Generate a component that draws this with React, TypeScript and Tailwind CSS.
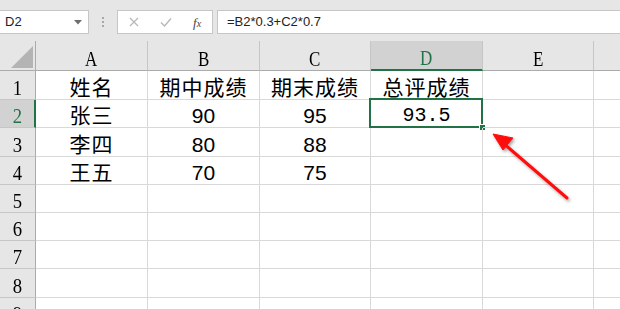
import React from "react";

const cols = [
  { label: "A", w: 112 },
  { label: "B", w: 112 },
  { label: "C", w: 111 },
  { label: "D", w: 112 },
  { label: "E", w: 111 },
  { label: "", w: 112 },
];

const rowHeights = [29, 28, 29, 28, 28, 28, 28, 29, 28];

const data: string[][] = [
  ["姓名", "期中成绩", "期末成绩", "总评成绩", "", ""],
  ["张三", "90", "95", "93.5", "", ""],
  ["李四", "80", "88", "", "", ""],
  ["王五", "70", "75", "", "", ""],
];

const cjk = { fontFamily: '"Noto Sans CJK SC", "Noto Sans", sans-serif' };
const num = { fontFamily: '"Liberation Sans", Arial, sans-serif' };
const serif = { fontFamily: '"Liberation Serif", "Times New Roman", serif' };
const mono = { fontFamily: '"Liberation Mono", "DejaVu Sans Mono", monospace' };

function Cell({ text, w, r, c }: { text: string; w: number; r: number; c: number }) {
  const isSel = r === 1 && c === 3;
  const isNum = /^[0-9.]+$/.test(text);
  const style = isSel ? mono : isNum ? num : cjk;
  return (
    <div
      className="relative shrink-0 border-r border-b border-[#d9d9d9] flex items-center justify-center text-black"
      style={{ width: w }}
    >
      {text && (
        <span
          className={isSel ? "text-[20px] leading-none pt-[4px]" : isNum ? "text-[21px] leading-none pt-[4px]" : "text-[21px] leading-none pt-[2px] tracking-[1px]"}
          style={style}
        >
          {text}
        </span>
      )}
      {isSel && (
        <>
          <div className="absolute -left-[2px] -top-[2px] -right-[1px] -bottom-[1px] border-2 border-[#217346]" />
          <div className="absolute -right-[4px] -bottom-[4px] w-[7px] h-[7px] bg-[#217346] border border-white" />
        </>
      )}
    </div>
  );
}

export default function App() {
  return (
    <div className="relative w-[620px] h-[309px] overflow-hidden bg-white">
      {/* Formula bar */}
      <div className="h-[41px] bg-[#e6e6e6] pt-[10px] flex items-start">
        <div className="w-[89px] h-[24px] bg-white border border-l-0 border-[#c6c6c6] flex items-center justify-between pl-[5px] pr-[6px]">
          <span className="text-[13px] text-[#222]" style={{ fontFamily: '"Liberation Sans", Arial, sans-serif' }}>
            D2
          </span>
          <svg width="8" height="5" viewBox="0 0 8 5">
            <path d="M0 0 L8 0 L4 4.5 Z" fill="#6d6d6d" />
          </svg>
        </div>
        <div className="w-[28px] h-[24px] flex flex-col items-center justify-center gap-[2px]">
          <div className="w-[2px] h-[2px] bg-[#a8a8a8]" />
          <div className="w-[2px] h-[2px] bg-[#a8a8a8]" />
          <div className="w-[2px] h-[2px] bg-[#a8a8a8]" />
        </div>
        <div className="w-[96px] h-[24px] bg-white border border-[#c6c6c6] flex items-center">
          <div className="w-[32px] flex justify-center">
            <svg width="10" height="10" viewBox="0 0 10 10">
              <path d="M1 1 L9 9 M9 1 L1 9" stroke="#b8b8b8" strokeWidth="1.3" />
            </svg>
          </div>
          <div className="w-[33px] flex justify-center">
            <svg width="12" height="10" viewBox="0 0 12 10">
              <path d="M1 5.5 L4.5 9 L11 1.5" stroke="#b8b8b8" strokeWidth="1.4" fill="none" />
            </svg>
          </div>
          <div className="w-[30px] flex justify-center">
            <span className="text-[13px] italic text-[#444] leading-none" style={serif}>
              f<span className="text-[10px]">x</span>
            </span>
          </div>
        </div>
        <div className="ml-[4px] flex-1 h-[24px] bg-white border border-r-0 border-[#c6c6c6] flex items-center pl-[9px]">
          <span className="text-[13px] text-[#222]" style={{ fontFamily: '"Liberation Sans", Arial, sans-serif' }}>
            =B2*0.3+C2*0.7
          </span>
        </div>
      </div>

      {/* Column header */}
      <div className="flex h-[30px]">
        <div className="w-[36px] shrink-0 bg-[#e6e6e6] border-r border-b border-[#ababab] flex items-end justify-end pr-[2px] pb-[2px]">
          <svg width="22" height="22" viewBox="0 0 22 22">
            <path d="M22 0 L22 22 L0 22 Z" fill="#b4b4b4" />
          </svg>
        </div>
        {cols.map((c, i) => {
          const sel = c.label === "D";
          return (
            <div
              key={i}
              className={
                "shrink-0 flex items-center justify-center border-r border-[#c6c6c6] " +
                (sel ? "bg-[#d2d2d2] border-b-2 border-b-[#217346] text-[#217346]" : "bg-[#e6e6e6] border-b border-b-[#ababab] text-black")
              }
              style={{ width: c.w }}
            >
              {c.label && (
                <span className="text-[20px] leading-none pt-[6px] inline-block scale-x-[0.85]" style={serif}>
                  {c.label}
                </span>
              )}
            </div>
          );
        })}
      </div>

      {/* Rows */}
      {rowHeights.map((h, r) => {
        const sel = r === 1;
        return (
          <div key={r} className="flex" style={{ height: h }}>
            <div
              className={
                "w-[36px] shrink-0 border-b border-[#c6c6c6] flex items-center justify-center " +
                (sel ? "bg-[#d2d2d2] border-r-2 border-r-[#217346] text-[#217346]" : "bg-[#e6e6e6] border-r border-r-[#ababab] text-black")
              }
            >
              <span className="text-[22px] leading-none pt-[5px] inline-block scale-x-[0.85]" style={serif}>
                {r + 1}
              </span>
            </div>
            {cols.map((c, ci) => (
              <Cell key={ci} text={data[r]?.[ci] ?? ""} w={c.w} r={r} c={ci} />
            ))}
          </div>
        );
      })}

      {/* Red arrow annotation */}
      <svg className="absolute left-0 top-0 pointer-events-none" width="620" height="309" viewBox="0 0 620 309">
        <defs>
          <filter id="sh" x="-20%" y="-20%" width="140%" height="140%">
            <feDropShadow dx="1.5" dy="2" stdDeviation="1.5" floodColor="#000" floodOpacity="0.35" />
          </filter>
        </defs>
        <g filter="url(#sh)">
          <path d="M567 198 L503 143" stroke="#ff1010" strokeWidth="3" strokeLinecap="round" />
          <path d="M493 134 L513 138 L503 150 Z" fill="#ff1010" stroke="#ff1010" strokeWidth="1" strokeLinejoin="round" />
        </g>
      </svg>
    </div>
  );
}
